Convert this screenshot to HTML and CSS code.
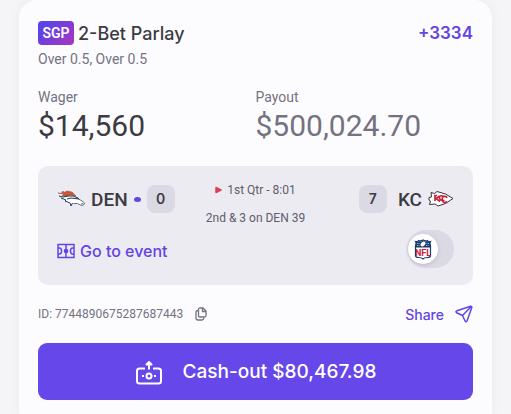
FILE: index.html
```html
<!DOCTYPE html>
<html lang="en">
<head>
    <meta charset="UTF-8">
    <meta name="viewport" content="width=device-width, initial-scale=1.0">
    <title>2-Bet Parlay</title>
    <link rel="stylesheet" href="styles.css">
</head>
<body>

    <main class="bet-card">
        <header class="bet-header">
            <span class="sgp-badge">SGP</span>
            <h1>2-Bet Parlay</h1>
            <span class="odds">+3334</span>
        </header>
        <p class="selections">Over 0.5, Over 0.5</p>

        <dl class="amounts">
            <div class="amount">
                <dt>Wager</dt>
                <dd>$14,560</dd>
            </div>
            <div class="amount payout">
                <dt>Payout</dt>
                <dd>$500,024.70</dd>
            </div>
        </dl>

        <section class="event">
            <div class="side">
                <div class="team">
                    <svg class="team-logo" viewBox="0 0 28 18" aria-hidden="true">
                        <path d="M8 7l8-1 5 2 6 4 .5 2-2 1.500-4-1-3-1-3 0-1.500 3-3-3-3-2 2-1-4-1z" fill="#fff"/>
                        <path d="M1 3l3 .5L6 1l1 1.500L10 1l5 1 4 4-5-1-5 1-4-.5 2-1.500z" fill="#d4522f" stroke="#7b4a48" stroke-width=".5"/>
                        <path d="M2 6l4 1 5-1 5 0 5 2 1 1-4-.5-4-.5-4 1M4 8l5 2-1 1 5 2 1 3 1.500-3" fill="none" stroke="#233556" stroke-width="1"/>
                        <path d="M20 8l5 3 2.500 2-1 2-2 .5-4-2-4 0M24 14l2-.5" fill="none" stroke="#3d4963" stroke-width=".8"/>
                    </svg>
                    <span class="team-name">DEN</span>
                    <span class="possession"></span>
                    <span class="score">0</span>
                </div>
                <a class="event-link" href="#event">
                    <svg width="18" height="16" viewBox="0 0 18 16" fill="none" stroke="currentColor" stroke-width="1.500" aria-hidden="true">
                        <path d="M1 1.500h16v13H1zM9 1.500v13M1 5h1.500q2 0 2 3t-2 3H1M17 5h-1.500q-2 0-2 3t2 3H17"/>
                        <circle cx="9" cy="8" r="1.600" fill="currentColor"/>
                    </svg>
                    Go to event
                </a>
            </div>

            <div class="game-clock">
                <span class="clock"><svg width="7" height="8" viewBox="0 0 7 8" aria-hidden="true"><path d="M1 1.500l5 2.500-5 2.500z" fill="#dc4058" stroke="#dc4058" stroke-width="1.500" stroke-linejoin="round"/></svg>1st Qtr - 8:01</span>
                <span>2nd &amp; 3 on DEN 39</span>
            </div>

            <div class="side side-away">
                <div class="team">
                    <span class="score">7</span>
                    <span class="team-name">KC</span>
                    <svg class="team-logo logo-kc" viewBox="0 0 26 18" aria-hidden="true">
                        <path d="M1.500 14.500l1-3.500-1.500-1 0-2.500 2.500-.5-.5-4.500 3.500 1L9 1.500q9 1.500 16 7-7 6-15 7.500l-3-2z" fill="#fff" stroke="#35333a" stroke-width="1"/>
                        <path d="M7 5.500v5.500M6 5.500h3M11.500 6L8 8.500l4 3M16.500 6.500q-4.500-2-5 1t5 3M19 8q-.5-2-3-1.500t-1.500 4 4.500 1" fill="none" stroke="#c8203a" stroke-width="1.600"/>
                    </svg>
                </div>
                <label class="league-switch">
                    <input type="checkbox" role="switch" aria-label="NFL">
                    <span class="knob">
                        <svg width="18" height="21" viewBox="0 0 18 21" aria-hidden="true">
                            <path d="M1.500 2.500q2 .5 3-1 2 1 4.500-.5 2.500 1.500 4.500.5 1 1.500 3 1-1 2 0 4v10q0 2-3 2-3.500 0-4.500 1.500-1-1.500-4.500-1.500-3 0-3-2v-10q1-2 0-4z" fill="#fff" stroke="#183b70" stroke-width="1.200"/>
                            <path d="M2 3q2 0 3-1 2 1 4-.5 2 1.500 4 .5 1 1 3 1v5.500H2z" fill="#183b70"/>
                            <path d="M3 4.500h3M3 6.500h2.500M12.500 4.500h2.500M12 6.500h3" stroke="#c9d3e4" stroke-width=".8" stroke-dasharray="1 .5"/>
                            <ellipse cx="9" cy="5" rx="2.900" ry="2" transform="rotate(-40 9 5)" fill="#fff"/>
                            <text x="9" y="17" text-anchor="middle" class="nfl-text">NFL</text>
                        </svg>
                    </span>
                </label>
            </div>
        </section>

        <div class="bet-meta">
            <span>ID: 7744890675287687443</span>
            <button class="copy-button" type="button" aria-label="Copy ID">
                <svg width="12" height="14" viewBox="0 0 12 14" fill="none" stroke="currentColor" stroke-width="1.300" stroke-linejoin="round" aria-hidden="true">
                    <path d="M3.500 2.500q0-1.500 1.500-1.500h3l3 3v4.500q0 1.500-1.500 1.500H5q-1.500 0-1.500-1.500zM7.500 1v3.500H11M3 3.500q-2 0-2 1.500v6q0 2 2 2h4q1.500 0 2-2"/>
                </svg>
            </button>
            <button class="share-button" type="button">
                Share
                <svg width="18" height="18" viewBox="0 0 18 18" fill="none" stroke="currentColor" stroke-width="1.500" stroke-linecap="round" stroke-linejoin="round" aria-hidden="true">
                    <path d="M15.500 1.300 2 5.700q-1.800.8-.3 2l5.800 2.800 2.600 5.500q1.200 1.500 2-.2L16.800 2.600q.2-1.500-1.300-1.300zM7.500 10.500l8.500-8.700"/>
                </svg>
            </button>
        </div>

        <button class="cashout-button" type="button">
            <svg width="28" height="26" viewBox="0 0 28 26" fill="none" stroke="currentColor" stroke-width="2" stroke-linejoin="round" aria-hidden="true">
                <path d="M10 9.500H4.500Q2 9.500 2 12v10q0 2.500 2.500 2.500h19q2.500 0 2.500-2.500V12q0-2.500-2.500-2.500H18M14 10.500V4"/>
                <path d="M11.500 5.500L14 3l2.500 2.500z" fill="currentColor"/>
                <circle cx="14" cy="17" r="2.500"/>
                <path d="M7 17h2M19 17h2"/>
            </svg>
            Cash-out $80,467.98
        </button>
    </main>

</body>
</html>
```
FILE: styles.css
```css
* {
    box-sizing: border-box;
}

body {
    margin: 0;
    padding: 0 19px;
    min-height: 100vh;
    display: flex;
    background-color: #f5f5f7;
    color: #3c3b44;
    font-family: Roboto, sans-serif;
}

h1, p, dl, dd {
    margin: 0;
}

button {
    padding: 0;
    border: none;
    background: none;
    cursor: pointer;
}

svg {
    flex-shrink: 0;
}

.bet-header h1,
.odds,
.score,
.event-link,
.share-button,
.cashout-button {
    font-family: Inter, sans-serif;
}

.bet-card {
    flex: 1;
    padding: 20px 19px 14px;
    border-radius: 18px 18px 0 0;
    background-color: #fcfcfe;
    box-shadow: 0 0 12px rgba(60, 60, 90, 0.05);
}

/* Header */
.bet-header {
    display: flex;
    align-items: center;
    gap: 4px;
    height: 26px;
}

.sgp-badge {
    width: 36px;
    border-radius: 4px;
    background: linear-gradient(135deg, #5b43e8 20%, #a936bd);
    color: white;
    font-size: 14px;
    font-weight: 600;
    line-height: 24px;
    text-align: center;
}

.bet-header h1 {
    font-size: 18px;
    font-weight: 500;
}

.odds {
    margin-left: auto;
    color: #6344e4;
    font-size: 17px;
    font-weight: 600;
}

.selections {
    margin-top: 3px;
    color: #747281;
    font-size: 14px;
    line-height: 20px;
}

/* Wager and payout */
.amounts {
    display: grid;
    grid-template-columns: 1fr 1fr;
    margin-top: 18px;
}

.amount dt {
    color: #747281;
    font-size: 14px;
    line-height: 20px;
}

.amount dd {
    font-size: 30px;
    line-height: 38px;
}

.payout dd {
    color: #747281;
}

/* Event panel */
.event {
    display: grid;
    grid-template-columns: 1fr auto 1fr;
    margin-top: 21px;
    padding: 10px 19px 17px;
    border-radius: 10px;
    background-color: #ecebf1;
}

.side {
    display: flex;
    flex-direction: column;
    gap: 17px;
    padding-top: 9px;
}

.side-away {
    align-items: flex-end;
}

.team {
    display: flex;
    align-items: center;
    gap: 6px;
}

.team-logo {
    width: 28px;
    height: 18px;
}

.logo-kc {
    width: 26px;
}

.team-name {
    font-size: 19px;
    font-weight: 500;
}

.possession {
    width: 7px;
    height: 5px;
    border-radius: 50%;
    background-color: #6344e4;
}

.score {
    width: 28px;
    border-radius: 8px;
    background-color: #dbdae4;
    font-size: 14px;
    font-weight: 600;
    line-height: 28px;
    text-align: center;
}

.side-away .score {
    margin-right: 5px;
}

.event-link {
    display: flex;
    align-items: center;
    gap: 5px;
    padding-top: 11px;
    color: #6344e4;
    font-size: 16px;
    font-weight: 500;
    text-decoration: none;
    white-space: nowrap;
}

.game-clock {
    display: flex;
    flex-direction: column;
    align-items: center;
    color: #5f5d6c;
    font-size: 12px;
    line-height: 28px;
}

.clock {
    display: flex;
    align-items: center;
    gap: 5px;
}

.league-switch {
    position: relative;
    display: flex;
    cursor: pointer;
}

.league-switch input {
    appearance: none;
    width: 47px;
    height: 38px;
    margin: 0;
    border-radius: 19px;
    background-color: #dbdae4;
}

.knob {
    position: absolute;
    top: 4px;
    left: 1px;
    display: flex;
    align-items: center;
    justify-content: center;
    width: 30px;
    height: 30px;
    border-radius: 50%;
    background-color: white;
    box-shadow: 0 1px 4px rgba(60, 60, 90, 0.2);
}

.league-switch input:checked + .knob {
    left: 16px;
}

.nfl-text {
    fill: #c8203a;
    font-family: Roboto, sans-serif;
    font-size: 9px;
    font-weight: 700;
}

/* Bet id and share */
.bet-meta {
    display: flex;
    align-items: center;
    height: 24px;
    margin-top: 17px;
    color: #747281;
    font-size: 12px;
}

.copy-button {
    display: flex;
    margin-left: 12px;
    color: #747281;
}

.share-button {
    display: flex;
    align-items: center;
    gap: 11px;
    margin-left: auto;
    color: #6344e4;
    font-size: 14px;
    font-weight: 500;
}

.cashout-button {
    display: flex;
    align-items: center;
    justify-content: center;
    gap: 20px;
    width: 100%;
    height: 57px;
    margin-top: 17px;
    border-radius: 9px;
    background-color: #6647e9;
    color: white;
    font-size: 19px;
    font-weight: 500;
}
```
